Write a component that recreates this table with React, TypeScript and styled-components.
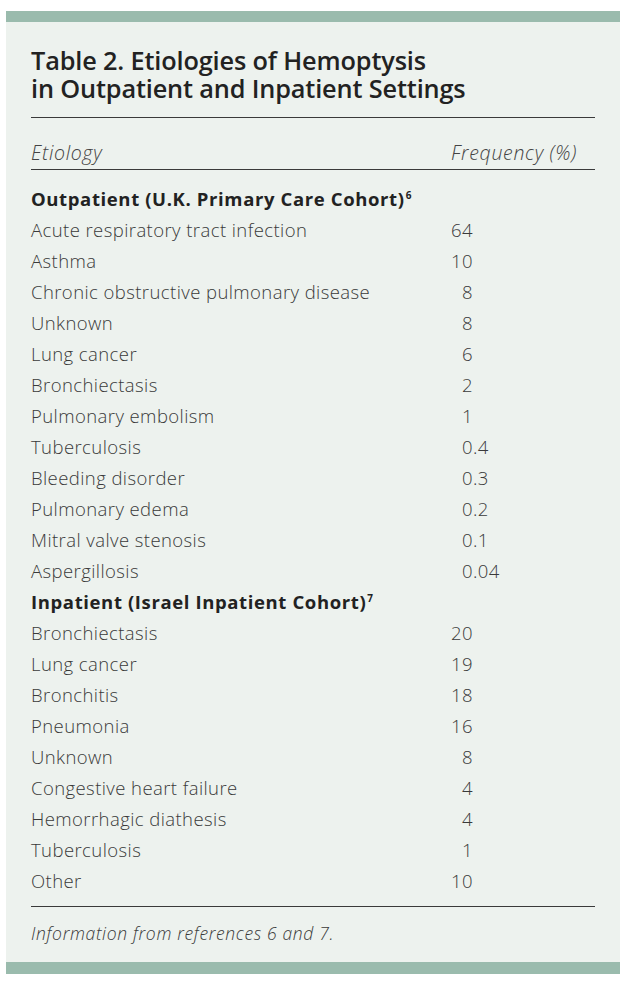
import React from "react";
import styled, { createGlobalStyle } from "styled-components";

const GlobalStyle = createGlobalStyle`
  html, body {
    margin: 0;
    padding: 0;
    background: #ffffff;
  }
  * {
    box-sizing: border-box;
  }
`;

const Page = styled.div`
  width: 628px;
  height: 984px;
  padding: 11px 8px 0 6px;
`;

const Panel = styled.section`
  width: 614px;
  background-color: #edf2ee;
  border-top: 11px solid #9abbad;
  border-bottom: 12px solid #9abbad;
  padding: 0 25px;
  font-family: "Open Sans", "Noto Sans", sans-serif;
  color: #333333;
`;

const Title = styled.h1`
  margin: 0;
  padding: 24px 0 15px;
  font-size: 25.3px;
  line-height: 28px;
  font-weight: 600;
  color: #222222;
  letter-spacing: -0.15px;
`;

const Rule = styled.hr`
  margin: 0;
  border: none;
  border-top: 1.5px solid #3a3a3a;
`;

const Grid = styled.div`
  display: grid;
  grid-template-columns: 420px 1fr;
`;

const HeaderRow = styled(Grid)`
  height: 51px;
  align-items: center;
  padding-top: 18px;
  font-style: italic;
  font-weight: 300;
  font-size: 19.5px;
  letter-spacing: 0.7px;
  color: #444444;
`;

const Body = styled.div`
  padding: 13px 0 10px;
`;

const Row = styled(Grid)`
  height: 31px;
  align-items: center;
  font-size: 18.5px;
  font-weight: 300;
  letter-spacing: 0.42px;
  color: #3a3a3a;
`;

const SectionRow = styled(Row)`
  font-weight: 700;
  color: #222222;
  letter-spacing: 0.62px;
`;

const Sup = styled.sup`
  font-size: 10px;
  line-height: 0;
  vertical-align: 7px;
  margin-left: 1px;
`;

const Value = styled.span`
  display: flex;
`;

const IntPart = styled.span`
  width: 22px;
  text-align: right;
`;

const Footnote = styled.p`
  margin: 0;
  height: 55px;
  padding-bottom: 4px;
  display: flex;
  align-items: center;
  font-size: 17.5px;
  font-style: italic;
  font-weight: 300;
  letter-spacing: 0.65px;
  color: #3a3a3a;
`;

type Item = { label: string; value: string };

const outpatient: Item[] = [
  { label: "Acute respiratory tract infection", value: "64" },
  { label: "Asthma", value: "10" },
  { label: "Chronic obstructive pulmonary disease", value: "8" },
  { label: "Unknown", value: "8" },
  { label: "Lung cancer", value: "6" },
  { label: "Bronchiectasis", value: "2" },
  { label: "Pulmonary embolism", value: "1" },
  { label: "Tuberculosis", value: "0.4" },
  { label: "Bleeding disorder", value: "0.3" },
  { label: "Pulmonary edema", value: "0.2" },
  { label: "Mitral valve stenosis", value: "0.1" },
  { label: "Aspergillosis", value: "0.04" },
];

const inpatient: Item[] = [
  { label: "Bronchiectasis", value: "20" },
  { label: "Lung cancer", value: "19" },
  { label: "Bronchitis", value: "18" },
  { label: "Pneumonia", value: "16" },
  { label: "Unknown", value: "8" },
  { label: "Congestive heart failure", value: "4" },
  { label: "Hemorrhagic diathesis", value: "4" },
  { label: "Tuberculosis", value: "1" },
  { label: "Other", value: "10" },
];

// keeps decimals lined up on the point
const Frequency = ({ value }: { value: string }) => {
  const [whole, frac] = value.split(".");
  return (
    <Value>
      <IntPart>{whole}</IntPart>
      {frac !== undefined && <span>.{frac}</span>}
    </Value>
  );
};

const Section = ({ title, note, items }: { title: string; note: string; items: Item[] }) => (
  <>
    <SectionRow>
      <span>
        {title}
        <Sup>{note}</Sup>
      </span>
    </SectionRow>
    {items.map((item) => (
      <Row key={title + item.label}>
        <span>{item.label}</span>
        <Frequency value={item.value} />
      </Row>
    ))}
  </>
);

export default function App() {
  return (
    <Page>
      <GlobalStyle />
      <Panel>
        <Title>
          Table 2. Etiologies of Hemoptysis
          <br />
          in Outpatient and Inpatient Settings
        </Title>
        <Rule />
        <HeaderRow>
          <span>Etiology</span>
          <span>Frequency (%)</span>
        </HeaderRow>
        <Rule />
        <Body>
          <Section title="Outpatient (U.K. Primary Care Cohort)" note="6" items={outpatient} />
          <Section title="Inpatient (Israel Inpatient Cohort)" note="7" items={inpatient} />
        </Body>
        <Rule />
        <Footnote>Information from references 6 and 7.</Footnote>
      </Panel>
    </Page>
  );
}
